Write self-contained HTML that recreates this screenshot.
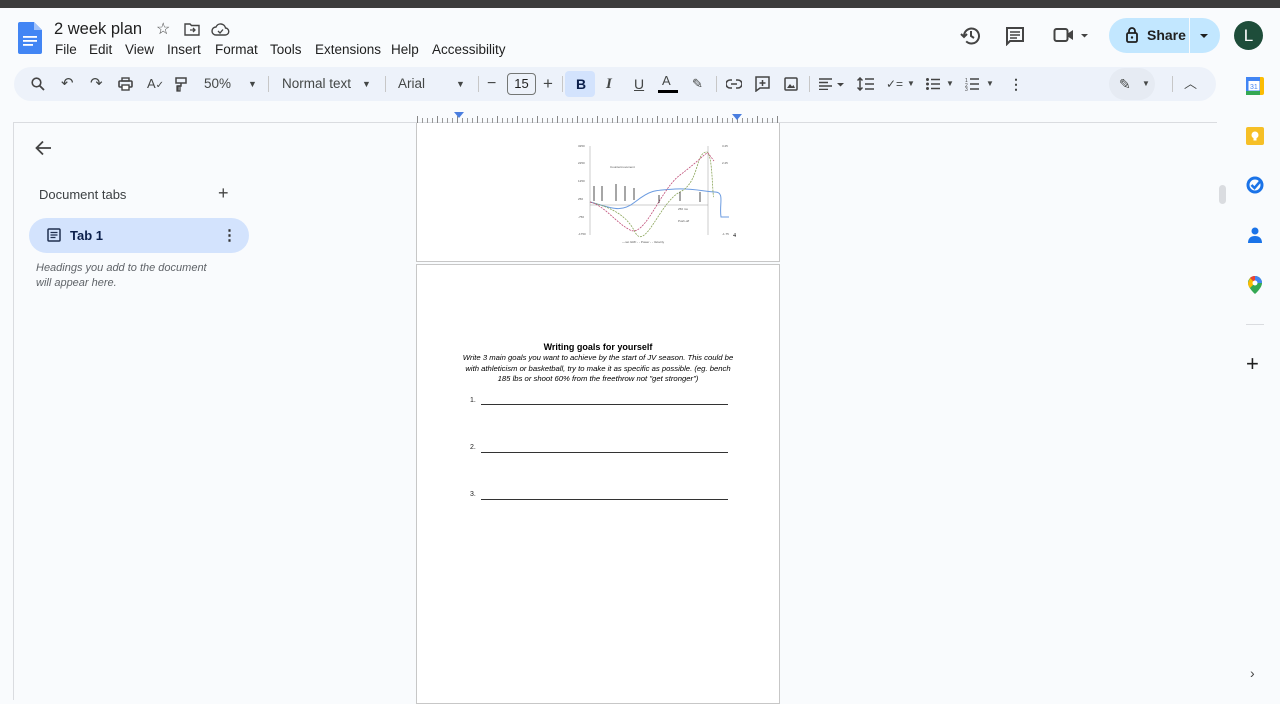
<!DOCTYPE html>
<html><head><meta charset="utf-8"><style>
*{box-sizing:border-box;margin:0;padding:0}
body{width:1280px;height:700px;overflow:hidden;background:#f9fbfd;font-family:"Liberation Sans",Arial,sans-serif;color:#1f1f1f;position:relative}
.abs{position:absolute}
.topbar{left:0;top:0;width:1280px;height:8px;background:#3c3c3c}
.menu span{position:absolute;top:0;font-size:13.5px;white-space:nowrap}
.tb{left:14px;top:67px;width:1202px;height:34px;background:#edf2fa;border-radius:17px}
.t{position:absolute;top:0;height:34px;line-height:34px;font-size:13px;color:#444746}
.sep{position:absolute;top:9px;width:1px;height:16px;background:#c7c7c7}
.ic{position:absolute}
.page{background:#fff;border:1px solid #c7c7c7}
</style></head><body>
<div class="abs topbar"></div>
<svg class="abs" style="left:18px;top:22px" width="24" height="32" viewBox="0 0 24 32"><path d="M2 0h14l8 8v22a2 2 0 0 1-2 2H2a2 2 0 0 1-2-2V2a2 2 0 0 1 2-2z" fill="#4285f4"/><path d="M16 0v8h8z" fill="#a1c2fa"/><rect x="5" y="14" width="14" height="1.8" fill="#fff"/><rect x="5" y="18" width="14" height="1.8" fill="#fff"/><rect x="5" y="22" width="10" height="1.8" fill="#fff"/></svg>
<div class="abs" style="left:54px;top:20px;font-size:16.5px;color:#1f1f1f">2 week plan</div>
<div class="abs" style="left:156px;top:19px;font-size:16px;color:#444">☆</div>
<svg class="abs" style="left:184px;top:23px" width="16" height="13" viewBox="0 0 16 13"><path d="M1 1h5l1.5 1.5H15v9.5H1z" fill="none" stroke="#444" stroke-width="1.4"/><path d="M6 7h5M9 5l2 2-2 2" fill="none" stroke="#444" stroke-width="1.3"/></svg>
<svg class="abs" style="left:211px;top:23px" width="19" height="13" viewBox="0 0 19 13"><path d="M5 12a4 4 0 0 1 0-8 5 5 0 0 1 9.5 1A3.5 3.5 0 0 1 14 12z" fill="none" stroke="#444" stroke-width="1.4"/><path d="M7 8l2 2 3-3.5" fill="none" stroke="#444" stroke-width="1.3"/></svg>
<div class="abs menu" style="left:0;top:42px;color:#1f1f1f"><span style="left:55px">File</span><span style="left:89px">Edit</span><span style="left:125px">View</span><span style="left:167px">Insert</span><span style="left:215px">Format</span><span style="left:270px">Tools</span><span style="left:315px">Extensions</span><span style="left:391px">Help</span><span style="left:432px">Accessibility</span></div>
<svg class="abs" style="left:960px;top:25px" width="22" height="22" viewBox="0 0 22 22"><path d="M4 11a7.5 7.5 0 1 1 2.2 5.3" fill="none" stroke="#444" stroke-width="2"/><path d="M1 9l3 3 3-3" fill="none" stroke="#444" stroke-width="2"/><path d="M11 6v5l3 2" fill="none" stroke="#444" stroke-width="2"/></svg>
<svg class="abs" style="left:1005px;top:26px" width="20" height="20" viewBox="0 0 20 20"><path d="M2 2h16v13H5l-3 3z" fill="none" stroke="#444" stroke-width="2"/><path d="M5 6h10M5 9h10M5 12h7" stroke="#444" stroke-width="1.6"/></svg>
<svg class="abs" style="left:1053px;top:27px" width="38" height="16" viewBox="0 0 38 16"><rect x="1.5" y="2" width="13" height="12" rx="2" fill="none" stroke="#444" stroke-width="2"/><path d="M14 7l6-4v10l-6-4z" fill="#444"/><path d="M28 7h7l-3.5 3.5z" fill="#444"/></svg>
<div class="abs" style="left:1109px;top:18px;width:111px;height:35px;border-radius:18px;background:#c2e7ff"></div>
<div class="abs" style="left:1189px;top:18px;width:1px;height:35px;background:#f9fbfd"></div>
<svg class="abs" style="left:1126px;top:27px" width="12" height="16" viewBox="0 0 12 16"><rect x="1" y="6" width="10" height="9" rx="1.5" fill="none" stroke="#1f1f1f" stroke-width="1.8"/><path d="M3 6V4a3 3 0 0 1 6 0v2" fill="none" stroke="#1f1f1f" stroke-width="1.8"/><circle cx="6" cy="10.5" r="1.2" fill="#1f1f1f"/></svg>
<div class="abs" style="left:1147px;top:27px;font-size:14px;font-weight:bold;color:#1f1f1f">Share</div>
<div class="abs" style="left:1200px;top:34px;width:0;height:0;border-left:4px solid transparent;border-right:4px solid transparent;border-top:4px solid #1f1f1f"></div>
<div class="abs" style="left:1234px;top:21px;width:29px;height:29px;border-radius:50%;background:#1e4d3a;color:#fff;font-size:17px;text-align:center;line-height:29px">L</div>
<div class="abs tb">
<svg class="ic" style="left:17px;top:10px" width="14" height="14" viewBox="0 0 14 14"><circle cx="5.5" cy="5.5" r="4.3" fill="none" stroke="#444" stroke-width="1.6"/><path d="M8.7 8.7L13 13" stroke="#444" stroke-width="1.8"/></svg>
<div class="t" style="left:47px;font-size:15px">↶</div><div class="t" style="left:76px;font-size:15px">↷</div>
<svg class="ic" style="left:104px;top:10px" width="15" height="14" viewBox="0 0 15 14"><rect x="1" y="4" width="13" height="6" rx="1" fill="none" stroke="#444" stroke-width="1.6"/><rect x="4" y="1" width="7" height="3" fill="none" stroke="#444" stroke-width="1.4"/><rect x="4" y="8" width="7" height="5" fill="#fff" stroke="#444" stroke-width="1.4"/></svg>
<div class="t" style="left:133px;font-size:13px">A<span style="font-size:10px">✓</span></div>
<svg class="ic" style="left:161px;top:10px" width="12" height="15" viewBox="0 0 12 15"><rect x="1" y="1" width="10" height="5" fill="none" stroke="#444" stroke-width="1.5"/><path d="M6 6v3H3v5" fill="none" stroke="#444" stroke-width="1.5"/><rect x="2" y="9" width="3" height="5" fill="none" stroke="#444" stroke-width="1.3"/></svg>
<div class="t" style="left:190px;font-size:13.5px">50%</div>
<div class="t" style="left:234px;font-size:9px">▼</div>
<div class="sep" style="left:254px"></div>
<div class="t" style="left:268px;font-size:13.5px">Normal text</div><div class="t" style="left:348px;font-size:9px">▼</div>
<div class="sep" style="left:371px"></div>
<div class="t" style="left:384px;font-size:13.5px">Arial</div><div class="t" style="left:442px;font-size:9px">▼</div>
<div class="sep" style="left:464px"></div>
<div class="t" style="left:473px;font-size:16px">−</div>
<div class="abs" style="left:493px;top:6px;width:29px;height:22px;border:1px solid #747775;border-radius:4px;font-size:13px;text-align:center;line-height:20px;color:#1f1f1f">15</div>
<div class="t" style="left:529px;font-size:17px">+</div>
<div class="sep" style="left:548px"></div>
<div class="abs" style="left:551px;top:4px;width:30px;height:26px;background:#d3e3fd;border-radius:4px"></div>
<div class="t" style="left:562px;font-weight:bold;font-size:14px;color:#0b1f4b">B</div>
<div class="t" style="left:592px;font-style:italic;font-size:15px;font-family:'Liberation Serif',serif;font-weight:bold">I</div>
<div class="t" style="left:620px;text-decoration:underline;font-size:14px">U</div>
<div class="t" style="left:648px;font-size:13px;top:-3px">A</div><div class="abs" style="left:644px;top:23px;width:20px;height:3px;background:#000"></div>
<div class="t" style="left:678px;font-size:13px">✎</div>
<div class="sep" style="left:702px"></div>
<svg class="ic" style="left:712px;top:12px" width="16" height="10" viewBox="0 0 16 10"><path d="M6 1H4a4 4 0 0 0 0 8h2M10 1h2a4 4 0 0 1 0 8h-2M5 5h6" fill="none" stroke="#444" stroke-width="1.6"/></svg>
<svg class="ic" style="left:741px;top:9px" width="15" height="16" viewBox="0 0 15 16"><path d="M1 1h13v11H5l-4 3z" fill="none" stroke="#444" stroke-width="1.5"/><path d="M7.5 4v6M4.5 7h6" stroke="#444" stroke-width="1.5"/></svg>
<svg class="ic" style="left:770px;top:10px" width="14" height="14" viewBox="0 0 14 14"><rect x="1" y="1" width="12" height="12" rx="1" fill="none" stroke="#444" stroke-width="1.5"/><path d="M3 11l3-4 2 2.5 1.5-1.5L11 11z" fill="#444"/></svg>
<div class="sep" style="left:795px"></div>
<svg class="ic" style="left:805px;top:11px" width="36" height="12" viewBox="0 0 36 12"><path d="M0 1h13M0 4.5h9M0 8h13M0 11.5h9" stroke="#444" stroke-width="1.5"/><path d="M18 5h7l-3.5 3.5z" fill="#444"/></svg>
<svg class="ic" style="left:843px;top:10px" width="17" height="14" viewBox="0 0 17 14"><path d="M3 1v12M0.5 3.5L3 1l2.5 2.5M0.5 10.5L3 13l2.5-2.5M8 2h9M8 7h9M8 12h9" fill="none" stroke="#444" stroke-width="1.5"/></svg>
<div class="t" style="left:872px;font-size:12px">✓=</div><div class="t" style="left:893px;font-size:8px">▼</div>
<svg class="ic" style="left:912px;top:11px" width="14" height="12" viewBox="0 0 14 12"><circle cx="1.5" cy="1.5" r="1.5" fill="#444"/><circle cx="1.5" cy="6" r="1.5" fill="#444"/><circle cx="1.5" cy="10.5" r="1.5" fill="#444"/><path d="M5 1.5h9M5 6h9M5 10.5h9" stroke="#444" stroke-width="1.5"/></svg>
<div class="t" style="left:932px;font-size:8px">▼</div>
<svg class="ic" style="left:951px;top:10px" width="14" height="14" viewBox="0 0 14 14"><path d="M5 2h9M5 7h9M5 12h9" stroke="#444" stroke-width="1.5"/><text x="0" y="5" font-size="5" fill="#444">1</text><text x="0" y="10" font-size="5" fill="#444">2</text><text x="0" y="14" font-size="5" fill="#444">3</text></svg>
<div class="t" style="left:972px;font-size:8px">▼</div>
<div class="t" style="left:995px;font-size:14px;font-weight:bold">⋮</div>
<div class="abs" style="left:1095px;top:1px;width:46px;height:32px;border-radius:16px;background:#e6ebf3"></div>
<div class="t" style="left:1105px;font-size:14px">✎</div><div class="t" style="left:1128px;font-size:8px">▼</div>
<div class="sep" style="left:1158px"></div>
<div class="t" style="left:1170px;font-size:13px">︿</div>
</div>
<div class="abs" style="left:13px;top:122px;width:1204px;height:1px;background:#dadce0"></div>
<div class="abs" style="left:13px;top:122px;width:1px;height:578px;background:#dadce0"></div>
<!-- ruler -->
<div class="abs" style="left:417px;top:118px;width:363px;height:5px;background:repeating-linear-gradient(90deg,#999 0 1px,transparent 1px 5px)"></div>
<div class="abs" style="left:417px;top:116px;width:363px;height:7px;background:repeating-linear-gradient(90deg,#888 0 1px,transparent 1px 20px)"></div>
<div class="abs" style="left:454px;top:112px;width:0;height:0;border-left:5px solid transparent;border-right:5px solid transparent;border-top:6px solid #4a7ee0"></div>
<div class="abs" style="left:732px;top:114px;width:0;height:0;border-left:5px solid transparent;border-right:5px solid transparent;border-top:6px solid #4a7ee0"></div>
<svg class="abs" style="left:35px;top:140px" width="17" height="16" viewBox="0 0 17 16"><path d="M16 8H2M8 1.5L1.5 8 8 14.5" fill="none" stroke="#444" stroke-width="1.8"/></svg>
<div class="abs" style="left:39px;top:187px;font-size:13px;color:#3c4043">Document tabs</div>
<div class="abs" style="left:218px;top:183px;font-size:18px;color:#444">+</div>
<div class="abs" style="left:29px;top:218px;width:220px;height:35px;border-radius:18px;background:#d3e3fd"></div>
<svg class="abs" style="left:47px;top:228px" width="14" height="14" viewBox="0 0 14 14"><rect x="1" y="1" width="12" height="12" rx="1" fill="none" stroke="#1f2f4f" stroke-width="1.5"/><path d="M3.5 4.5h7M3.5 7h7M3.5 9.5h5" stroke="#1f2f4f" stroke-width="1.3"/></svg>
<div class="abs" style="left:70px;top:228px;font-size:13px;font-weight:bold;color:#0b1f4b">Tab 1</div>
<div class="abs" style="left:222px;top:226px;font-size:15px;font-weight:bold;color:#333">⋮</div>
<div class="abs" style="left:36px;top:261px;font-size:11px;font-style:italic;color:#5f6368;line-height:15px">Headings you add to the document<br>will appear here.</div>
<div class="abs page" style="left:416px;top:123px;width:364px;height:139px;border-top:none"></div>
<svg class="abs" style="left:560px;top:142px" width="190" height="105" viewBox="0 0 190 105">
<g font-size="3" fill="#555"><text x="18" y="5">3250</text><text x="18" y="22">2250</text><text x="18" y="40">1250</text><text x="18" y="58">250</text><text x="18" y="76">-750</text><text x="18" y="93">-1750</text><text x="50" y="26">Countermovement</text><text x="118" y="68">250 ms</text><text x="118" y="80">Push-off</text><text x="162" y="5">3.25</text><text x="162" y="22">2.25</text><text x="162" y="93">-1.75</text></g>
<text x="173" y="95" font-size="6" font-family="Liberation Serif">4</text>
<path d="M30 4v89M148 4v89M30 63h118" stroke="#999" stroke-width=".5"/>
<path d="M30 60c20 5 30 12 45 0s20-12 40-13 30 3 40 3 4 12 6 25h8" fill="none" stroke="#6b9be0" stroke-width="1"/>
<path d="M30 60c15 4 35 10 45 30s25-30 45-40 15-40 27-40c6 3 5 45 7 45" fill="none" stroke="#8aa55a" stroke-width=".8" stroke-dasharray="2 1"/>
<path d="M30 60c15 4 25 20 40 28s30-40 50-55 25-22 28-22l6 8" fill="none" stroke="#c0507a" stroke-width=".8" stroke-dasharray="2 1"/>
<g stroke="#222" stroke-width=".8" fill="none"><path d="M34 44v15M42 44v15M56 42v17M65 44v15M74 46v12M99 53v8M120 50v9M140 50v10"/></g>
<text x="62" y="101" font-size="3" fill="#555">—net GRF - - Power - - Velocity</text>
</svg>
<div class="abs page" style="left:416px;top:264px;width:364px;height:440px"></div>
<div class="abs" style="left:417px;top:342px;width:362px;text-align:center;font-size:9px;font-weight:bold;color:#000">Writing goals for yourself</div>
<div class="abs" style="left:417px;top:353px;width:362px;text-align:center;font-size:7.7px;font-style:italic;color:#000;line-height:10.5px">Write 3 main goals you want to achieve by the start of JV season. This could be<br>with athleticism or basketball, try to make it as specific as possible. (eg. bench<br>185 lbs or shoot 60% from the freethrow not "get stronger")</div>
<div class="abs" style="left:470px;top:397px;font-size:7px">1.</div><div class="abs" style="left:481px;top:404px;width:247px;height:1px;background:#333"></div>
<div class="abs" style="left:470px;top:444px;font-size:7px">2.</div><div class="abs" style="left:481px;top:452px;width:247px;height:1px;background:#333"></div>
<div class="abs" style="left:470px;top:491px;font-size:7px">3.</div><div class="abs" style="left:481px;top:499px;width:247px;height:1px;background:#333"></div>
<div class="abs" style="left:1219px;top:185px;width:7px;height:19px;border-radius:4px;background:#dadce0"></div>
<svg class="abs" style="left:1246px;top:77px" width="18" height="18" viewBox="0 0 18 18"><rect x="0" y="0" width="18" height="18" rx="2" fill="#fbbc04"/><rect x="0" y="14" width="14" height="4" fill="#34a853"/><rect x="0" y="0" width="14" height="14" fill="#4285f4"/><rect x="2.5" y="4" width="11" height="9.5" fill="#fff"/><text x="4" y="12" font-size="7" fill="#4285f4">31</text></svg>
<svg class="abs" style="left:1246px;top:127px" width="18" height="18" viewBox="0 0 18 18"><rect width="18" height="18" rx="2" fill="#f6bf26"/><circle cx="9" cy="8" r="3.5" fill="#fff"/><rect x="7.5" y="11" width="3" height="2.5" fill="#fff"/></svg>
<svg class="abs" style="left:1246px;top:176px" width="18" height="18" viewBox="0 0 18 18"><circle cx="9" cy="9" r="7" fill="none" stroke="#1a73e8" stroke-width="3"/><path d="M5.5 9l3 3 6-7" fill="none" stroke="#1a73e8" stroke-width="2.5"/></svg>
<svg class="abs" style="left:1247px;top:226px" width="16" height="18" viewBox="0 0 16 18"><circle cx="8" cy="5" r="3.5" fill="#1a73e8"/><path d="M1 17c0-5 3-7 7-7s7 2 7 7z" fill="#1a73e8"/></svg>
<svg class="abs" style="left:1248px;top:276px" width="14" height="18" viewBox="0 0 14 18"><path d="M7 0a7 7 0 0 1 7 7c0 5-7 11-7 11S0 12 0 7a7 7 0 0 1 7-7z" fill="#34a853"/><path d="M7 0a7 7 0 0 0-5 2l5 5z" fill="#ea4335"/><path d="M0 7c0 2 1 4 2 5l5-5-5-5z" fill="#fbbc04"/><path d="M7 0a7 7 0 0 1 7 7l-7 0z" fill="#4285f4"/><circle cx="7" cy="7" r="2.5" fill="#fff"/></svg>
<div class="abs" style="left:1246px;top:324px;width:18px;height:1px;background:#dadce0"></div>
<div class="abs" style="left:1246px;top:351px;font-size:22px;color:#1f1f1f">+</div>
<div class="abs" style="left:1250px;top:665px;font-size:14px;color:#444">›</div>
</body></html>
